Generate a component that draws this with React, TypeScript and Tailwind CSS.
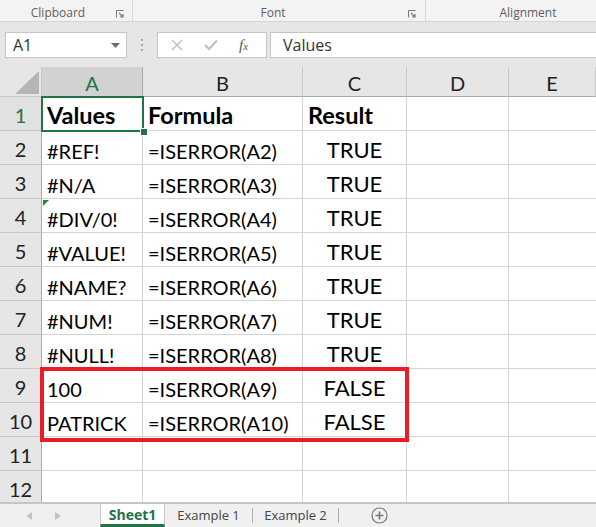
import React from "react";

const cellFont = { fontFamily: "Lato, 'Open Sans', sans-serif" };

const rows: [string, string, string][] = [
  ["#REF!", "=ISERROR(A2)", "TRUE"],
  ["#N/A", "=ISERROR(A3)", "TRUE"],
  ["#DIV/0!", "=ISERROR(A4)", "TRUE"],
  ["#VALUE!", "=ISERROR(A5)", "TRUE"],
  ["#NAME?", "=ISERROR(A6)", "TRUE"],
  ["#NUM!", "=ISERROR(A7)", "TRUE"],
  ["#NULL!", "=ISERROR(A8)", "TRUE"],
  ["100", "=ISERROR(A9)", "FALSE"],
  ["PATRICK", "=ISERROR(A10)", "FALSE"],
  ["", "", ""],
  ["", "", ""],
];

function Launcher() {
  return (
    <svg width="8" height="8" viewBox="0 0 8 8" className="text-[#7a7a7a]">
      <path d="M0.5 7.5 V0.5 H7.5" fill="none" stroke="currentColor" strokeWidth="1" />
      <path d="M3 3 L7 7 M7 4 V7 H4" fill="none" stroke="currentColor" strokeWidth="1.2" />
    </svg>
  );
}

export default function App() {
  return (
    <div className="w-[596px] h-[527px] overflow-hidden bg-[#e6e6e6] flex flex-col select-none">
      {/* Ribbon group labels */}
      <div
        className="h-[22px] shrink-0 bg-[#f3f3f3] border-b border-[#d5d5d5] flex text-[12px] leading-none text-[#5f5f5f]"
        style={{ fontFamily: "'Open Sans', 'Noto Sans', sans-serif" }}
      >
        <div className="w-[133px] relative flex items-center justify-center border-r border-[#d8d8d8] pr-[16px] pt-[5px]">
          <span>Clipboard</span>
          <span className="absolute right-[8px] top-[10px]">
            <Launcher />
          </span>
        </div>
        <div className="w-[293px] relative flex items-center justify-center border-r border-[#d8d8d8] pr-[12px] pt-[5px]">
          <span>Font</span>
          <span className="absolute right-[9px] top-[10px]">
            <Launcher />
          </span>
        </div>
        <div className="flex-1 flex items-center justify-center pl-[34px] pt-[5px]">
          <span>Alignment</span>
        </div>
      </div>

      {/* Formula bar */}
      <div className="h-[45px] shrink-0 flex items-start pt-[10px] pl-[5px]">
        <div
          className="w-[122px] h-[26px] bg-white border border-[#c6c6c6] flex items-center justify-between pl-[7px] pr-[6px] text-[16px] text-[#333]"
          style={{ fontFamily: "'Open Sans', 'Noto Sans', sans-serif" }}
        >
          <span>A1</span>
          <svg width="9" height="5" viewBox="0 0 9 5">
            <path d="M0 0 H9 L4.5 5 Z" fill="#6b6b6b" />
          </svg>
        </div>
        <div className="w-[30px] h-[26px] flex flex-col items-center justify-center gap-[3px]">
          <span className="w-[2px] h-[2px] bg-[#a8a8a8]" />
          <span className="w-[2px] h-[2px] bg-[#a8a8a8]" />
          <span className="w-[2px] h-[2px] bg-[#a8a8a8]" />
        </div>
        <div className="w-[110px] h-[26px] bg-white border border-[#c6c6c6] flex items-center">
          <svg width="12" height="12" viewBox="0 0 12 12" className="ml-[13px]">
            <path d="M1 1 L11 11 M11 1 L1 11" stroke="#bdbdbd" strokeWidth="1.4" />
          </svg>
          <svg width="14" height="12" viewBox="0 0 14 12" className="ml-[21px]">
            <path d="M1 6 L5 10 L13 1.5" stroke="#bdbdbd" strokeWidth="2" fill="none" />
          </svg>
          <span
            className="ml-[21px] text-[15px] italic text-[#555]"
            style={{ fontFamily: "'Liberation Serif', serif" }}
          >
            f<span className="text-[11px]">x</span>
          </span>
        </div>
        <div
          className="flex-1 ml-[3px] h-[26px] bg-white border border-[#c6c6c6] border-r-0 flex items-center pl-[12px] text-[16px] text-[#333]"
          style={{ fontFamily: "'Open Sans', 'Noto Sans', sans-serif" }}
        >
          Values
        </div>
      </div>

      {/* Sheet */}
      <div className="relative h-[435px] shrink-0 bg-white overflow-hidden" style={cellFont}>
        <div className="grid grid-cols-[42px_101px_160px_104px_102px_1fr] auto-rows-[34px] [grid-template-rows:30px]">
          {/* header row */}
          <div className="h-[30px] bg-[#e6e6e6] border-r border-b border-[#c8c8c8] relative">
            <svg width="24" height="23" viewBox="0 0 24 23" className="absolute right-[2px] bottom-[2px]">
              <path d="M24 0 V23 H0 Z" fill="#b5b5b5" />
            </svg>
          </div>
          <div className="h-[30px] bg-[#d2d2d2] border-r border-b border-[#ababab] flex items-end justify-center pb-[3px] leading-none text-[20px] text-[#217346]">
            A
          </div>
          {["B", "C", "D", "E"].map((c) => (
            <div
              key={c}
              className="h-[30px] bg-[#e6e6e6] border-r border-b border-[#ababab] border-r-[#c8c8c8] flex items-end justify-center pb-[3px] leading-none text-[20px] text-[#222]"
            >
              {c}
            </div>
          ))}

          {/* row 1 */}
          <div className="bg-[#e1e1e1] border-r border-b border-[#c8c8c8] border-r-[#ababab] flex items-end justify-center pb-[5px] leading-none text-[20px] text-[#217346]">
            1
          </div>
          <div className="border-r border-b border-[#d4d4d4] flex items-end pl-[5px] pb-[3px] leading-none text-[23.5px] font-bold text-black">
            Values
          </div>
          <div className="border-r border-b border-[#d4d4d4] flex items-end pl-[5px] pb-[3px] leading-none text-[23.5px] font-bold text-black">
            Formula
          </div>
          <div className="border-r border-b border-[#d4d4d4] flex items-end pl-[5px] pb-[3px] leading-none text-[23.5px] font-bold text-black">
            Result
          </div>
          <div className="border-r border-b border-[#d4d4d4]" />
          <div className="border-b border-[#d4d4d4]" />

          {rows.map((r, i) => (
            <React.Fragment key={i}>
              <div className="bg-[#e6e6e6] border-r border-b border-[#c8c8c8] border-r-[#ababab] flex items-end justify-center pb-[5px] leading-none text-[20px] text-[#222]">
                {i + 2}
              </div>
              <div className="relative border-r border-b border-[#d4d4d4] flex items-end pl-[5px] pb-[3px] leading-none text-[20px] text-black whitespace-nowrap">
                {i === 2 && (
                  <svg width="6" height="6" viewBox="0 0 6 6" className="absolute left-[1px] top-[1px]">
                    <path d="M0 0 H6 L0 6 Z" fill="#1e8a3c" />
                  </svg>
                )}
                {r[0]}
              </div>
              <div className="border-r border-b border-[#d4d4d4] flex items-end pl-[5px] pb-[3px] leading-none text-[20px] text-black whitespace-nowrap">
                {r[1]}
              </div>
              <div className="border-r border-b border-[#d4d4d4] flex items-end justify-center pb-[3px] leading-none text-[22px] text-black">
                {r[2]}
              </div>
              <div className="border-r border-b border-[#d4d4d4]" />
              <div className="border-b border-[#d4d4d4]" />
            </React.Fragment>
          ))}
        </div>

        {/* selected cell A1 */}
        <div className="absolute left-[41px] top-[29px] w-[103px] h-[36px] border-2 border-[#217346] pointer-events-none" />
        <div className="absolute left-[140px] top-[61px] w-[6px] h-[6px] bg-[#217346] border border-white box-content pointer-events-none" />

        {/* red highlight box */}
        <div className="absolute left-[40px] top-[300px] w-[369px] h-[75px] border-[4px] border-[#ed1c24] pointer-events-none" />
      </div>

      {/* Sheet tabs */}
      <div
        className="h-[25px] shrink-0 bg-[#f0f0f0] border-t-2 border-[#c6c6c6] flex items-stretch text-[13px]"
        style={{ fontFamily: "'Open Sans', 'Noto Sans', sans-serif" }}
      >
        <div className="w-[100px] flex items-center">
          <svg width="6" height="8" viewBox="0 0 6 8" className="ml-[26px]">
            <path d="M6 0 V8 L0 4 Z" fill="#c3c3c3" />
          </svg>
          <svg width="6" height="8" viewBox="0 0 6 8" className="ml-[23px]">
            <path d="M0 0 V8 L6 4 Z" fill="#c3c3c3" />
          </svg>
        </div>
        <div className="w-[65px] bg-white border-x border-[#c6c6c6] border-b-[3px] border-b-[#217346] flex items-center justify-center font-bold text-[14px] text-[#217346]">
          Sheet1
        </div>
        <div className="w-[87px] flex items-center justify-center text-[#444]">Example 1</div>
        <div className="w-[1px] my-[4px] bg-[#b0b0b0]" />
        <div className="w-[85px] flex items-center justify-center text-[#444]">Example 2</div>
        <div className="w-[1px] my-[4px] bg-[#b0b0b0]" />
        <div className="ml-[32px] flex items-center">
          <svg width="17" height="17" viewBox="0 0 17 17">
            <circle cx="8.5" cy="8.5" r="7.5" fill="none" stroke="#777" strokeWidth="1.2" />
            <path d="M8.5 4.5 V12.5 M4.5 8.5 H12.5" stroke="#777" strokeWidth="1.6" />
          </svg>
        </div>
      </div>
    </div>
  );
}
